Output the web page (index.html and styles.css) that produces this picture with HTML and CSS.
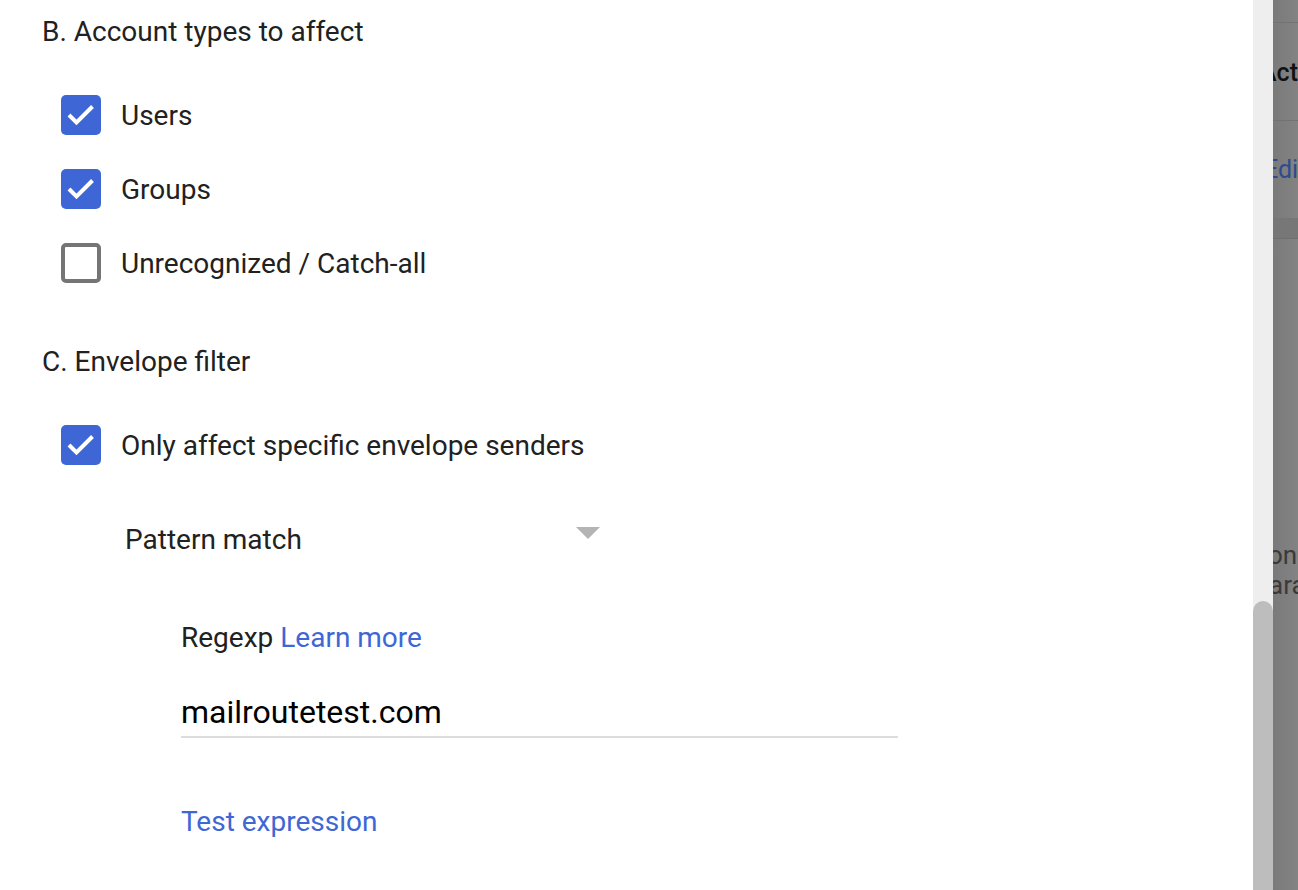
FILE: index.html
```html
<!DOCTYPE html>
<html>
<head>
<meta charset="utf-8">
<link rel="stylesheet" href="styles.css">
</head>
<body>
<div class="page">
  <main class="panel">
    <h2 class="heading heading-b">B. Account types to affect</h2>
    <div class="options">
      <label class="option"><span class="box checked"><svg viewBox="0 0 40 40" class="tick"><path d="M8 20 L15.5 27.5 L31.5 11.5"/></svg></span><span class="label">Users</span></label>
      <label class="option"><span class="box checked"><svg viewBox="0 0 40 40" class="tick"><path d="M8 20 L15.5 27.5 L31.5 11.5"/></svg></span><span class="label">Groups</span></label>
      <label class="option"><span class="box"></span><span class="label">Unrecognized / Catch-all</span></label>
    </div>
    <h2 class="heading heading-c">C. Envelope filter</h2>
    <div class="options">
      <label class="option"><span class="box checked"><svg viewBox="0 0 40 40" class="tick"><path d="M8 20 L15.5 27.5 L31.5 11.5"/></svg></span><span class="label">Only affect specific envelope senders</span></label>
    </div>
    <div class="select">
      <span class="select-text">Pattern match</span>
      <span class="arrow"></span>
    </div>
    <div class="regexp">
      <div class="regexp-label">Regexp <a class="link">Learn more</a></div>
      <div class="input">mailroutetest.com</div>
      <a class="link test">Test expression</a>
    </div>
  </main>
  <div class="scrollbar"><div class="thumb"></div></div>
  <aside class="behind">
    <div class="b-row b-top"></div>
    <div class="b-row b-head"><span class="b-act">Act</span></div>
    <div class="b-row b-edit"><span class="b-editlink">Edit</span></div>
    <div class="b-band"></div>
    <div class="b-text"><span class="b-line">on</span><span class="b-line">ara</span></div>
  </aside>
</div>
</body>
</html>
```
FILE: styles.css
```css
html, body {
  margin: 0;
  padding: 0;
  height: 100%;
  overflow: hidden;
}
body {
  font-family: Roboto, "Liberation Sans", Arial, sans-serif;
  color: #212121;
  background: #fff;
}
.page {
  display: flex;
  height: 890px;
}
.panel {
  width: 1253px;
  flex: none;
  background: #fff;
  padding-left: 42px;
  box-sizing: border-box;
}
.heading {
  margin: 0;
  font-weight: 400;
  font-size: 28px;
  line-height: 60px;
  height: 62px;
  padding-top: 2px;
  box-sizing: border-box;
  color: #212121;
}
.heading-c {
  margin-top: 47px;
}
.options {
  display: flex;
  flex-direction: column;
  gap: 34px;
  margin-top: 33px;
  padding-left: 19px;
}
.option {
  display: flex;
  align-items: center;
  height: 40px;
  gap: 20px;
}
.box {
  width: 40px;
  height: 40px;
  box-sizing: border-box;
  border: 4px solid #757575;
  border-radius: 5px;
  flex: none;
  display: flex;
}
.box.checked {
  border: none;
  background: #3e67d5;
}
.tick {
  width: 40px;
  height: 40px;
}
.tick path {
  fill: none;
  stroke: #fff;
  stroke-width: 4;
}
.label {
  font-size: 28px;
  line-height: 40px;
  padding-top: 2px;
}
.select {
  margin-top: 54px;
  margin-left: 83px;
  width: 475px;
  height: 40px;
  display: flex;
  align-items: center;
  justify-content: space-between;
}
.select-text {
  font-size: 28px;
  line-height: 40px;
  padding-top: 2px;
}
.arrow {
  width: 0;
  height: 0;
  border-left: 12px solid transparent;
  border-right: 12px solid transparent;
  border-top: 12px solid #b4b4b4;
  align-self: flex-start;
  margin-top: 8px;
}
.regexp {
  margin-left: 139px;
  margin-top: 58px;
  display: flex;
  flex-direction: column;
  align-items: flex-start;
}
.regexp-label {
  font-size: 28px;
  line-height: 40px;
  padding-top: 1px;
}
.link {
  color: #3e67d5;
}
.input {
  margin-top: 34px;
  width: 717px;
  font-size: 32px;
  line-height: 40px;
  color: #000;
  padding-bottom: 4px;
  border-bottom: 2px solid #dcdcdc;
}
.test {
  margin-top: 62px;
  font-size: 28px;
  line-height: 40px;
  padding-top: 2px;
}
.scrollbar {
  width: 20px;
  flex: none;
  background: #eeeeee;
  display: flex;
  flex-direction: column;
  justify-content: flex-end;
}
.thumb {
  height: 289px;
  background: #bdbdbd;
  border-radius: 10px 10px 0 0;
}
.behind {
  flex: 1;
  background: linear-gradient(90deg, #7a7a7a, #838383);
  overflow: hidden;
  display: flex;
  flex-direction: column;
  white-space: nowrap;
}
.b-row {
  border-bottom: 1px solid #727272;
  box-sizing: border-box;
}
.b-top {
  height: 23px;
}
.b-head {
  height: 98px;
  display: flex;
  align-items: center;
}
.b-act {
  font-size: 25px;
  font-weight: 500;
  color: #111;
  margin-left: -13px;
  padding-top: 2px;
}
.b-edit {
  height: 97px;
  border-bottom: none;
  display: flex;
  align-items: center;
}
.b-editlink {
  font-size: 25px;
  color: #2f4a8e;
  margin-left: -9px;
}
.b-band {
  height: 20px;
  background: #777;
  border-bottom: 1px solid #6f6f6f;
}
.b-text {
  margin-top: 301px;
  display: flex;
  flex-direction: column;
  font-size: 26px;
  line-height: 30px;
  color: #3a3a3a;
}
.b-line:first-child {
  margin-left: -5px;
}
.b-line:last-child {
  margin-left: -4px;
}
```
